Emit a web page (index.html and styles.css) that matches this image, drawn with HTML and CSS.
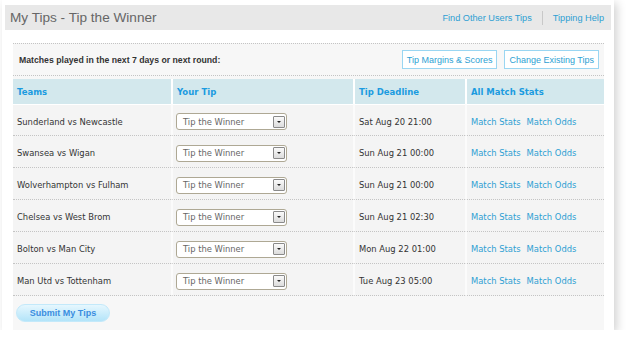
FILE: index.html
```html
<!DOCTYPE html>
<html>
  <head>
    <title>My Tips - Tip the Winner</title>
    <link rel="stylesheet" href="styles.css">
  </head>

  <body>
    <div id="card">
      <div id="topbar">
        <h1 class="title">My Tips - Tip the Winner</h1>
        <div class="top-links">
          <a href="#">Find Other Users Tips</a>
          <span class="sep"></span>
          <a href="#">Tipping Help</a>
        </div>
      </div>

      <div id="panel">
        <div class="panel-head">
          <span class="intro">Matches played in the next 7 days or next round:</span>
          <div class="head-buttons">
            <a class="box-btn" href="#">Tip Margins &amp; Scores</a>
            <a class="box-btn" href="#">Change Existing Tips</a>
          </div>
        </div>

        <table class="tips">
          <thead>
            <tr>
              <th class="c-team">Teams</th>
              <th class="c-tip">Your Tip</th>
              <th class="c-date">Tip Deadline</th>
              <th class="c-stats">All Match Stats</th>
            </tr>
          </thead>
          <tbody>
            <tr>
              <td>Sunderland vs Newcastle</td>
              <td><div class="select"><span>Tip the Winner</span><span class="arrow"></span></div></td>
              <td>Sat Aug 20 21:00</td>
              <td><a href="#">Match Stats</a><a href="#">Match Odds</a></td>
            </tr>
            <tr>
              <td>Swansea vs Wigan</td>
              <td><div class="select"><span>Tip the Winner</span><span class="arrow"></span></div></td>
              <td>Sun Aug 21 00:00</td>
              <td><a href="#">Match Stats</a><a href="#">Match Odds</a></td>
            </tr>
            <tr>
              <td>Wolverhampton vs Fulham</td>
              <td><div class="select"><span>Tip the Winner</span><span class="arrow"></span></div></td>
              <td>Sun Aug 21 00:00</td>
              <td><a href="#">Match Stats</a><a href="#">Match Odds</a></td>
            </tr>
            <tr>
              <td>Chelsea vs West Brom</td>
              <td><div class="select"><span>Tip the Winner</span><span class="arrow"></span></div></td>
              <td>Sun Aug 21 02:30</td>
              <td><a href="#">Match Stats</a><a href="#">Match Odds</a></td>
            </tr>
            <tr>
              <td>Bolton vs Man City</td>
              <td><div class="select"><span>Tip the Winner</span><span class="arrow"></span></div></td>
              <td>Mon Aug 22 01:00</td>
              <td><a href="#">Match Stats</a><a href="#">Match Odds</a></td>
            </tr>
            <tr>
              <td>Man Utd vs Tottenham</td>
              <td><div class="select"><span>Tip the Winner</span><span class="arrow"></span></div></td>
              <td>Tue Aug 23 05:00</td>
              <td><a href="#">Match Stats</a><a href="#">Match Odds</a></td>
            </tr>
          </tbody>
        </table>

        <button id="submit-button" type="button">Submit My Tips</button>
      </div>
    </div>
  </body>
</html>
```

FILE: styles.css
```css
* {
  box-sizing: border-box;
}

body {
  margin: 0;
  background-color: #ffffff;
  font-family: 'DejaVu Sans', Verdana, sans-serif;
  color: #333333;
}

a {
  color: #2e9fd3;
  text-decoration: none;
}

#card {
  width: 612px;
  height: 330px;
  margin-left: 2px;
  padding: 5px 3px 0 3px;
  background: #ffffff;
  box-shadow: 3px 3px 9px rgba(0, 0, 0, 0.18);
}

#topbar {
  display: flex;
  justify-content: space-between;
  align-items: center;
  height: 25px;
  padding: 0 7px 0 5px;
  background: #e8e8e8;
}

.title {
  margin: 0;
  font-family: 'Liberation Sans', Arial, sans-serif;
  font-size: 13.6px;
  font-weight: normal;
  color: #666666;
}

.top-links {
  display: flex;
  align-items: center;
  gap: 10px;
  font-family: 'Liberation Sans', Arial, sans-serif;
  font-size: 9.2px;
}

.top-links .sep {
  width: 1px;
  height: 14px;
  background: #c8c8c8;
}

#panel {
  width: 591px;
  height: 287px;
  margin: 13px 0 0 8px;
  border-top: 1px dotted #c4c4c4;
  background: #f7f7f7;
}

.panel-head {
  display: flex;
  justify-content: space-between;
  align-items: center;
  height: 32px;
  padding: 0 5px 0 6px;
  border-bottom: 1px dotted #c4c4c4;
  margin-bottom: 3px;
}

.intro {
  font-family: 'Liberation Sans', Arial, sans-serif;
  font-size: 8.7px;
  font-weight: bold;
  color: #333333;
}

.head-buttons {
  display: flex;
  gap: 7px;
}

.box-btn {
  display: flex;
  align-items: center;
  height: 19px;
  padding: 0 4px;
  border: 1px solid #9ad6f2;
  background: #ffffff;
  font-family: 'Liberation Sans', Arial, sans-serif;
  font-size: 9px;
}

.tips {
  width: 591px;
  table-layout: fixed;
  border-collapse: separate;
  border-spacing: 0;
  font-size: 8.4px;
}

.tips th {
  height: 25px;
  padding: 0 4px;
  background: #d3e8ed;
  color: #1b9be0;
  font-size: 8.5px;
  font-weight: bold;
  text-align: left;
}

.tips th + th,
.tips td + td {
  border-left: 2px solid #ffffff;
}

.tips td + td {
  border-left-color: #fbfbfb;
}

.c-team { width: 158px; }
.c-tip { width: 182px; }
.c-date { width: 112px; }
.c-stats { width: 139px; }

.tips td {
  height: 32px;
  padding: 3px 4px 0 4px;
  border-bottom: 1px dotted #c4c4c4;
  background: #f4f4f4;
  color: #333333;
}

.tips tbody tr:first-child td {
  border-top: 1px solid #ffffff;
}

.tips td:nth-child(2) {
  padding-left: 3px;
}

.tips td a + a {
  margin-left: 6px;
}

.select {
  display: flex;
  justify-content: space-between;
  align-items: center;
  width: 111px;
  height: 17px;
  padding: 0 1px 0 6px;
  border: 1px solid #aea894;
  border-radius: 3px;
  background: #ffffff;
  color: #666666;
}

.select .arrow {
  position: relative;
  width: 12px;
  height: 12px;
  border: 1px solid #8a8a8a;
  border-radius: 1px;
  background: linear-gradient(#fafafa, #dcdcdc);
}

.select .arrow::after {
  content: '';
  position: absolute;
  left: 3px;
  top: 4px;
  border-left: 2px solid transparent;
  border-right: 2px solid transparent;
  border-top: 2px solid #222222;
}

#submit-button {
  display: block;
  width: 94px;
  height: 18px;
  margin: 8px 0 0 3px;
  padding: 0;
  border: 1px solid #c3e9fa;
  border-radius: 9px;
  background: linear-gradient(#e6f7fe, #b3e4f9);
  color: #3a8de0;
  font-family: 'Liberation Sans', Arial, sans-serif;
  font-size: 9px;
  font-weight: bold;
  cursor: pointer;
}
```
